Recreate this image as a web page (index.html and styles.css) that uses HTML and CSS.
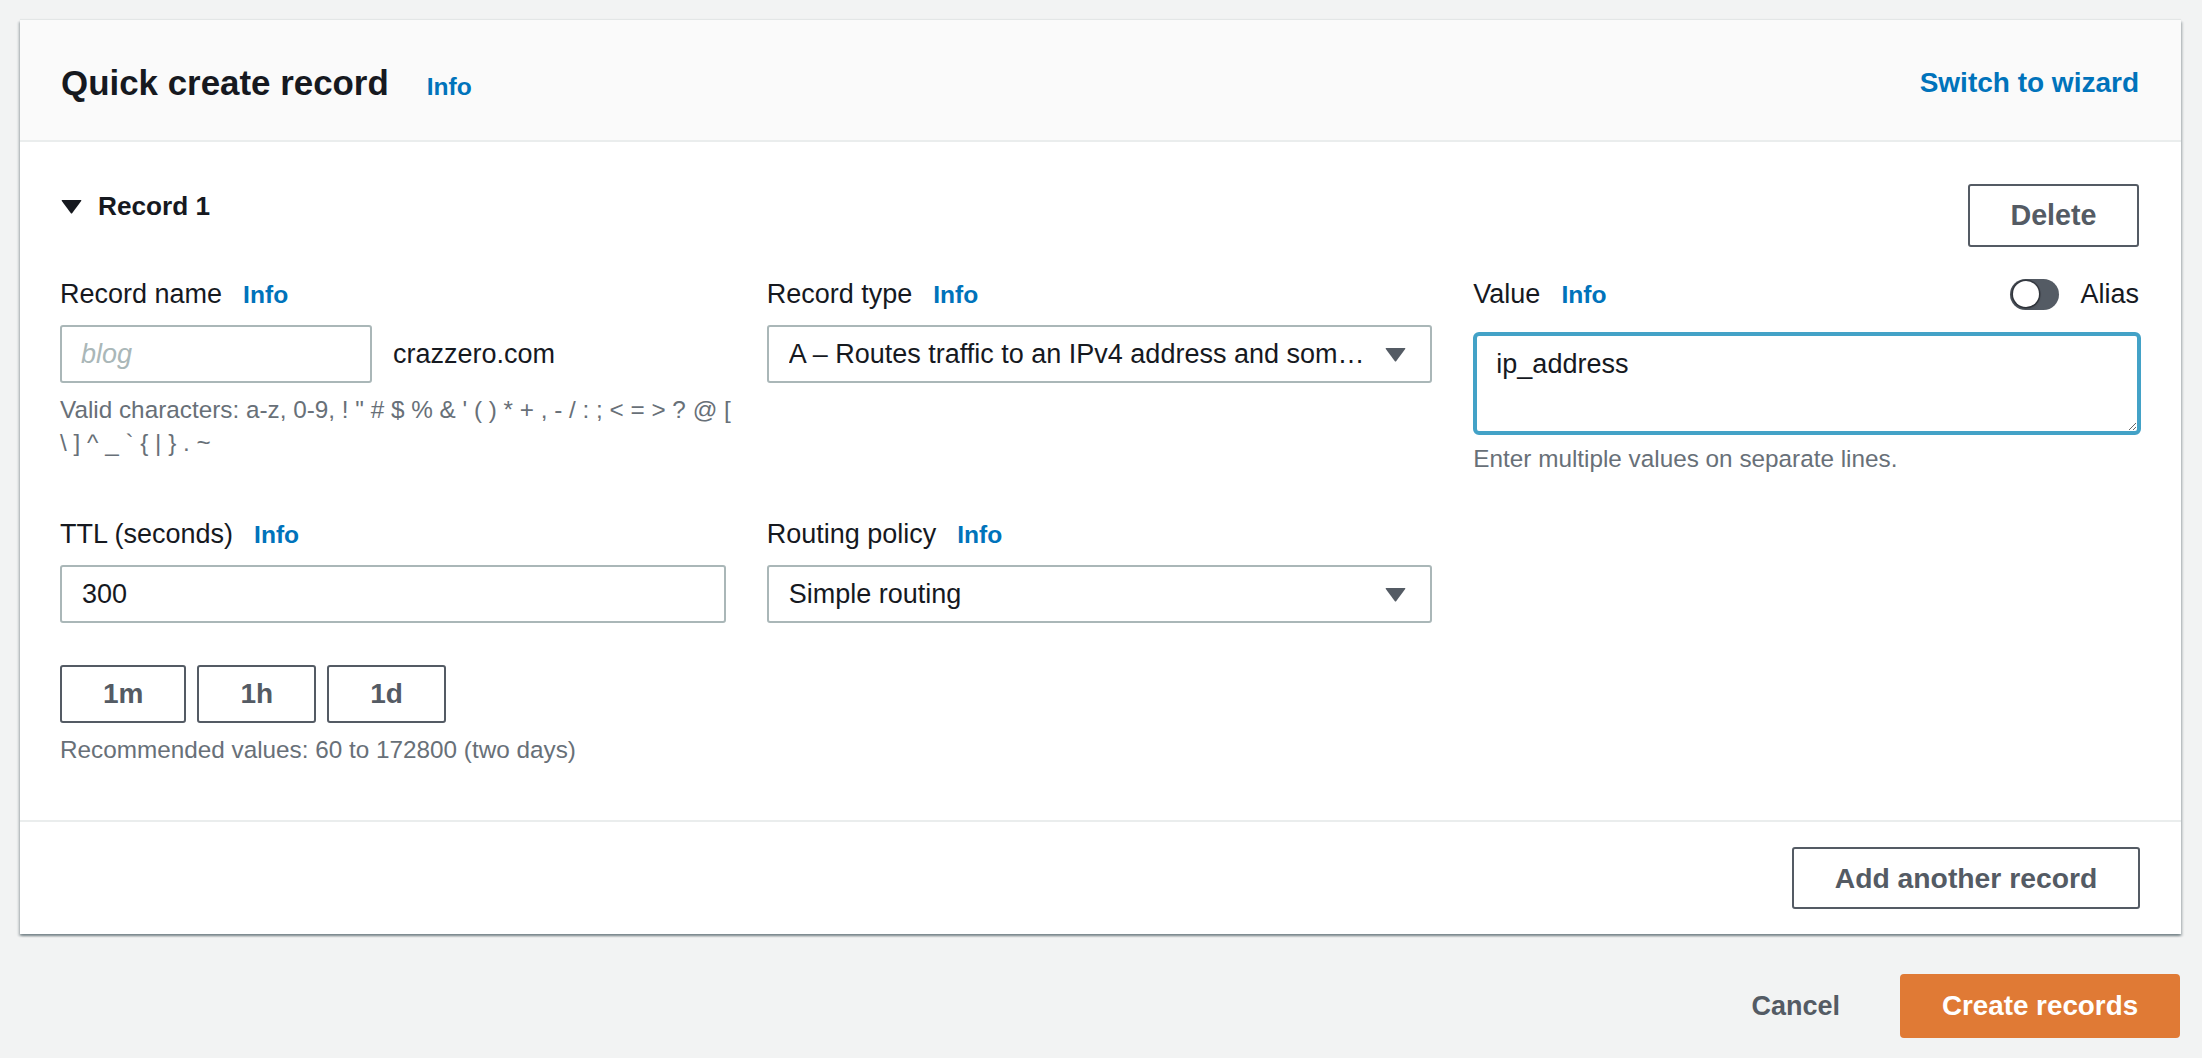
FILE: index.html
```html
<!DOCTYPE html>
<html lang="en">
<head>
<meta charset="utf-8">
<title>Quick create record</title>
<link rel="stylesheet" href="styles.css">
</head>
<body>
<div class="page">
  <section class="card">
    <header class="card-header">
      <div class="title-group">
        <h2 class="title">Quick create record</h2>
        <a class="info info-title">Info</a>
      </div>
      <a class="link-strong">Switch to wizard</a>
    </header>

    <div class="card-body">
      <div class="record-head">
        <div class="expander">
          <svg class="tri" width="21" height="15" viewBox="0 0 21 15"><path d="M1.2 1 H19.8 Q20.8 1 20.2 2 L11.3 14 Q10.5 15 9.7 14 L0.8 2 Q0.2 1 1.2 1 Z" fill="#16191f"/></svg>
          <span class="expander-text">Record 1</span>
        </div>
        <button class="btn btn-delete">Delete</button>
      </div>

      <div class="fields">
        <div class="field">
          <div class="label-row">
            <div class="label-group"><span class="label">Record name</span><a class="info">Info</a></div>
          </div>
          <div class="name-row">
            <input class="input input-name" type="text" placeholder="blog">
            <span class="suffix">crazzero.com</span>
          </div>
          <div class="hint hint-chars"><span class="line">Valid characters: a-z, 0-9, ! " # $ % &amp; ' ( ) * + , - / : ; &lt; = &gt; ? @ [</span><span class="line">\ ] ^ _ ` { | } . ~</span></div>
        </div>

        <div class="field">
          <div class="label-row">
            <div class="label-group"><span class="label">Record type</span><a class="info">Info</a></div>
          </div>
          <button class="select">
            <span class="select-text">A – Routes traffic to an IPv4 address and some AWS resources</span>
            <svg class="caret" width="21" height="15" viewBox="0 0 21 15"><path d="M1.2 1 H19.8 Q20.8 1 20.2 2 L11.3 14 Q10.5 15 9.7 14 L0.8 2 Q0.2 1 1.2 1 Z" fill="#545b64"/></svg>
          </button>
        </div>

        <div class="field">
          <div class="label-row label-row-split">
            <div class="label-group"><span class="label">Value</span><a class="info">Info</a></div>
            <div class="alias">
              <span class="toggle"><span class="knob"></span></span>
              <span class="label">Alias</span>
            </div>
          </div>
          <textarea class="textarea">ip_address</textarea>
          <div class="hint hint-value">Enter multiple values on separate lines.</div>
        </div>

        <div class="field">
          <div class="label-row">
            <div class="label-group"><span class="label">TTL (seconds)</span><a class="info">Info</a></div>
          </div>
          <input class="input" type="text" value="300">
          <div class="quick">
            <button class="btn btn-quick">1m</button>
            <button class="btn btn-quick">1h</button>
            <button class="btn btn-quick">1d</button>
          </div>
          <div class="hint hint-ttl">Recommended values: 60 to 172800 (two days)</div>
        </div>

        <div class="field">
          <div class="label-row">
            <div class="label-group"><span class="label">Routing policy</span><a class="info">Info</a></div>
          </div>
          <button class="select">
            <span class="select-text">Simple routing</span>
            <svg class="caret" width="21" height="15" viewBox="0 0 21 15"><path d="M1.2 1 H19.8 Q20.8 1 20.2 2 L11.3 14 Q10.5 15 9.7 14 L0.8 2 Q0.2 1 1.2 1 Z" fill="#545b64"/></svg>
          </button>
        </div>
      </div>
    </div>

    <footer class="card-footer">
      <button class="btn btn-add">Add another record</button>
    </footer>
  </section>

  <div class="actions">
    <button class="btn-link">Cancel</button>
    <button class="btn-primary">Create records</button>
  </div>
</div>
</body>
</html>
```
FILE: styles.css
```css
* { box-sizing: border-box; }

html, body {
  margin: 0;
  padding: 0;
  background: #f2f3f3;
  font-family: "Liberation Sans", Arial, sans-serif;
  color: #16191f;
}

.page {
  padding: 20px 21px 0 20px;
}

/* ---------- card ---------- */
.card {
  background: #ffffff;
  box-shadow: 0 2px 2px 0 rgba(0, 28, 36, 0.32),
              2px 2px 2px 0 rgba(0, 28, 36, 0.14),
              -2px 2px 2px 0 rgba(0, 28, 36, 0.14),
              0 -1px 1px 0 rgba(0, 28, 36, 0.06);
}

.card-header {
  height: 122px;
  padding: 6px 42px 0 41px;
  display: flex;
  align-items: center;
  justify-content: space-between;
  background: #fafafa;
  border-bottom: 2px solid #eaeded;
}

.title-group {
  display: flex;
  align-items: baseline;
  gap: 38px;
}

.title {
  margin: 0;
  font-size: 34.9px;
  font-weight: 700;
  line-height: 1;
  color: #16191f;
}

.info {
  font-size: 24.6px;
  font-weight: 700;
  line-height: 1;
  color: #0073bb;
  text-decoration: none;
}

.link-strong {
  font-size: 28px;
  font-weight: 700;
  line-height: 1;
  color: #0073bb;
  text-decoration: none;
}

.card-body {
  padding: 42px 42px 54px 40px;
}

.record-head {
  display: flex;
  justify-content: space-between;
  align-items: flex-start;
}

.expander {
  display: flex;
  align-items: center;
  gap: 16px;
  margin-top: 9px;
  padding-left: 1px;
}

.tri { display: block; }

.expander-text {
  font-size: 26.2px;
  font-weight: 700;
  line-height: 1;
}

/* ---------- buttons ---------- */
.btn {
  font-family: "Liberation Sans", Arial, sans-serif;
  font-weight: 700;
  font-size: 28px;
  line-height: 1;
  color: #545b64;
  background: #ffffff;
  border: 2px solid #545b64;
  border-radius: 3px;
  padding: 0 40px;
  cursor: pointer;
}

.btn-delete {
  height: 63px;
  width: 171px;
  padding: 0;
  font-size: 28.7px;
}

.btn-quick {
  height: 58px;
  padding: 0 41px;
}

.btn-add {
  height: 62px;
  width: 348px;
  padding: 0;
  font-size: 28.3px;
}

/* ---------- fields ---------- */
.fields {
  margin-top: 32px;
  display: grid;
  grid-template-columns: 1fr 1fr 1fr;
  column-gap: 41px;
  row-gap: 44px;
}

.field {
  display: flex;
  flex-direction: column;
  align-items: stretch;
  min-width: 0;
}

.label-row {
  height: 30px;
  display: flex;
  align-items: center;
  margin-bottom: 16px;
}

.label-row-split {
  justify-content: space-between;
  margin-bottom: 23px;
}

.label-group {
  display: flex;
  align-items: baseline;
  gap: 21px;
}

.label {
  font-size: 27px;
  line-height: 1;
  color: #16191f;
}

.alias {
  display: flex;
  align-items: center;
  gap: 21px;
}

.toggle {
  position: relative;
  display: block;
  width: 49px;
  height: 31px;
  border-radius: 16px;
  background: linear-gradient(90deg, #474d55 0%, #545b64 60%);
}

.knob {
  position: absolute;
  left: 2.5px;
  top: 2.5px;
  width: 26px;
  height: 26px;
  border-radius: 50%;
  background: #ffffff;
  box-shadow: 0 0 0 1.5px rgba(22, 25, 31, 0.45), 1px 1px 2px rgba(0, 0, 0, 0.25);
}

.name-row {
  display: flex;
  align-items: center;
  gap: 21px;
}

.input {
  display: block;
  width: 100%;
  height: 58px;
  padding: 0 20px;
  border: 2px solid #aab7b8;
  border-radius: 3px;
  background: #ffffff;
  font-family: "Liberation Sans", Arial, sans-serif;
  font-size: 27px;
  color: #16191f;
  outline: none;
}

.input-name {
  width: 312px;
  flex: 0 0 312px;
  padding-left: 19px;
}

.input::placeholder {
  color: #aab7b8;
  font-style: italic;
  opacity: 1;
}

.suffix {
  font-size: 27px;
  line-height: 1;
  color: #16191f;
}

.select {
  width: 100%;
  height: 58px;
  display: flex;
  align-items: center;
  padding: 0 24px 0 20px;
  border: 2px solid #aab7b8;
  border-radius: 3px;
  background: #ffffff;
  font-family: "Liberation Sans", Arial, sans-serif;
  font-size: 27px;
  color: #16191f;
  text-align: left;
  cursor: pointer;
}

.select-text {
  flex: 1 1 auto;
  min-width: 0;
  margin-right: 20px;
  white-space: nowrap;
  overflow: hidden;
  text-overflow: ellipsis;
  line-height: 1.2;
}

.caret {
  flex: 0 0 21px;
  display: block;
}

.textarea {
  display: block;
  width: calc(100% + 2px);
  height: 103px;
  padding: 12px 19px 0 19px;
  border: 4px solid #43a2c7;
  border-radius: 6px;
  background: #ffffff;
  font-family: "Liberation Sans", Arial, sans-serif;
  font-size: 27px;
  line-height: 1.2;
  color: #16191f;
  resize: vertical;
  outline: none;
}

.hint {
  font-size: 24.3px;
  line-height: 33px;
  color: #687078;
}

.hint .line {
  display: block;
  white-space: nowrap;
}

.hint-chars { margin-top: 10px; }
.hint-value { margin-top: 7px; }
.hint-ttl { margin-top: 10px; }

.quick {
  display: flex;
  gap: 11px;
  margin-top: 42px;
}

/* ---------- footer ---------- */
.card-footer {
  display: flex;
  justify-content: flex-end;
  padding: 25px 41px 25px 41px;
  border-top: 2px solid #eaeded;
}

.actions {
  display: flex;
  justify-content: flex-end;
  align-items: center;
  gap: 60px;
  margin-top: 40px;
  padding-right: 1px;
}

.btn-link {
  background: transparent;
  border: none;
  padding: 0;
  font-family: "Liberation Sans", Arial, sans-serif;
  font-weight: 700;
  font-size: 27px;
  line-height: 1;
  color: #545b64;
  cursor: pointer;
}

.btn-primary {
  height: 64px;
  width: 280px;
  padding: 0;
  background: #e07a35;
  border: 2px solid #e07a35;
  border-radius: 4px;
  font-family: "Liberation Sans", Arial, sans-serif;
  font-weight: 700;
  font-size: 27.8px;
  line-height: 1;
  color: #ffffff;
  cursor: pointer;
}
```
